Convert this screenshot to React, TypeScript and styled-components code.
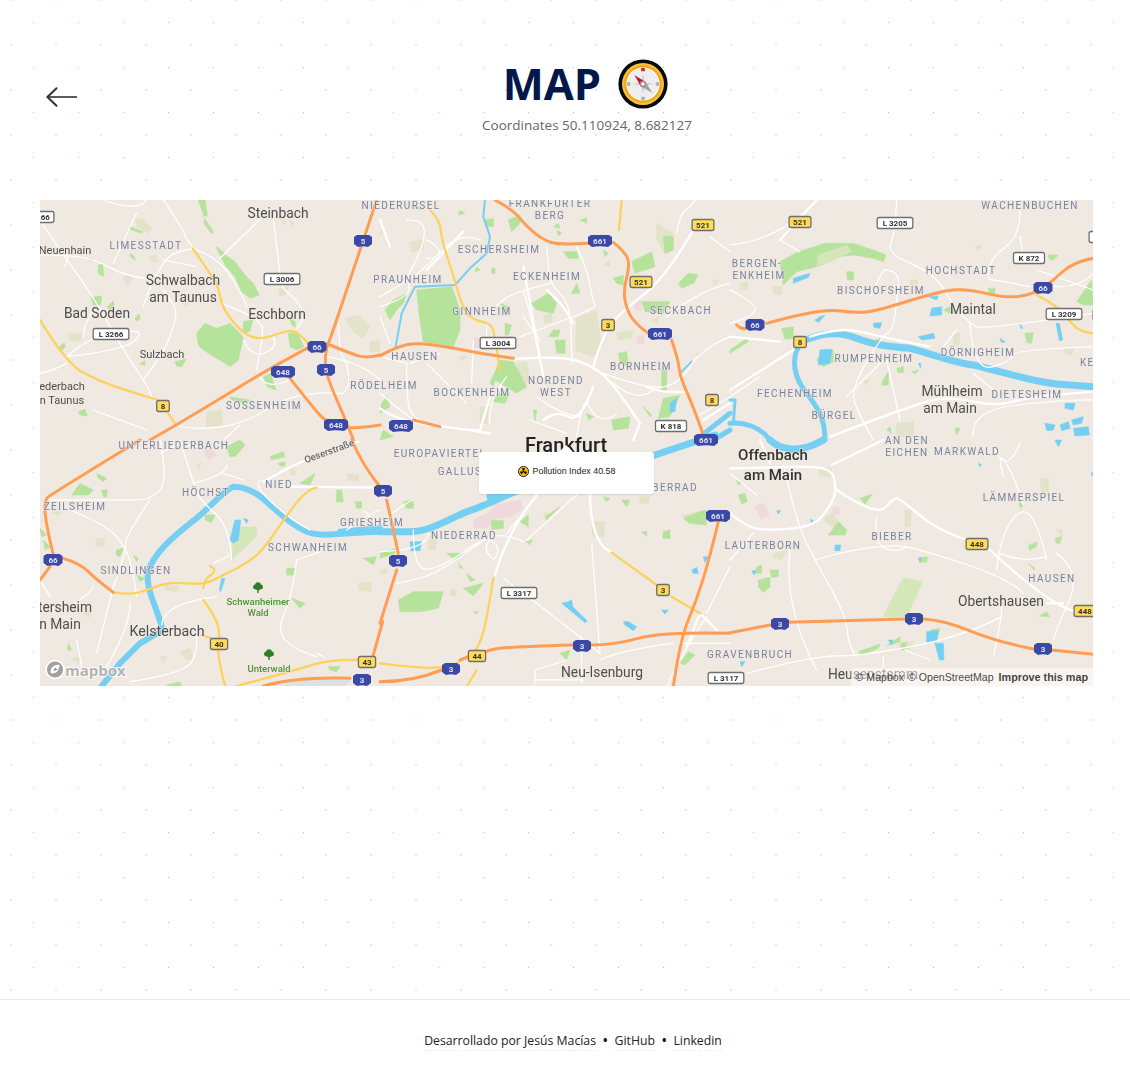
import React from "react";
import styled, { createGlobalStyle } from "styled-components";

const Global = createGlobalStyle`
  html, body { margin: 0; padding: 0; background: #fff; }
  body { font-family: "Open Sans", "Noto Sans", sans-serif; color: #222; }
  * { box-sizing: border-box; }
`;

const Page = styled.div`
  width: 1130px;
  min-height: 1080px;
  display: flex;
  flex-direction: column;
`;
const Main = styled.main`
  flex: 1;
  padding: 59px 37px 0 40px;
  background-color: #fff;
  background-image:
    radial-gradient(circle at 11px 1px, #d8effb 1.1px, transparent 1.5px),
    radial-gradient(circle at 33.5px 22.5px, #86cdf3 0.5px, transparent 0.9px);
  background-size: 45px 45px;
  background-position: 0 -1px, 0 0;
`;
const Header = styled.header`
  display: flex;
  align-items: flex-start;
  height: 141px;
  padding-left: 6px;
`;
const BackLink = styled.a`
  display: block;
  width: 32px;
  height: 20px;
  margin-top: 28px;
  color: #333;
`;
const TitleBlock = styled.div`
  flex: 1;
  display: flex;
  flex-direction: column;
  align-items: center;
`;
const TitleRow = styled.div`
  display: flex;
  align-items: center;
  gap: 17px;
  height: 50px;
`;
const Title = styled.h1`
  margin: 0;
  font-size: 43.5px;
  line-height: 50px;
  font-weight: 700;
  color: #03174b;
`;
const Subtitle = styled.p`
  margin: 7px 0 0 3px;
  font-size: 13.5px;
  line-height: 18px;
  color: #666;
`;
const MapFrame = styled.section`
  position: relative;
  width: 1053px;
  height: 486px;
  overflow: hidden;
  background: #f0e9e1;
`;
const MapSvg = styled.svg`
  display: block;
  width: 1053px;
  height: 486px;
  filter: blur(0.35px);
`;
const Popup = styled.div`
  position: absolute;
  left: 439px;
  top: 252px;
  width: 175px;
  height: 42px;
  display: flex;
  align-items: center;
  justify-content: center;
  gap: 4px;
  padding-bottom: 4px;
  background: #fff;
  border-radius: 3px;
  box-shadow: 0 1px 2px rgba(0, 0, 0, 0.1);
  font-family: "Liberation Sans", Arial, sans-serif;
  font-size: 8.9px;
  color: #222;
  &::before {
    content: "";
    position: absolute;
    left: 80px;
    top: -7px;
    border-left: 7px solid transparent;
    border-right: 7px solid transparent;
    border-bottom: 7px solid #fff;
  }
`;
const Attribution = styled.div`
  position: absolute;
  right: 0;
  bottom: 0;
  height: 18px;
  padding: 0 5px;
  display: flex;
  align-items: center;
  gap: 4px;
  background: rgba(255, 255, 255, 0.5);
  font-family: "Liberation Sans", Arial, sans-serif;
  font-size: 10.6px;
  color: rgba(0, 0, 0, 0.75);
  white-space: nowrap;
`;
const AttrStrong = styled.span`
  margin-left: 1px;
  font-weight: 700;
  font-size: 10.8px;
`;
const Logo = styled.div`
  position: absolute;
  left: 5px;
  bottom: 6px;
  display: flex;
  align-items: center;
`;
const LogoText = styled.span`
  font-family: "Open Sans", sans-serif;
  font-weight: 700;
  font-size: 15px;
  line-height: 20px;
  color: rgba(130, 130, 130, 0.6);
  -webkit-text-stroke: 2px rgba(255, 255, 255, 0.85);
  paint-order: stroke fill;
`;
const Footer = styled.footer`
  height: 81px;
  border-top: 1px solid #e9e9e9;
  background: #fff;
  display: flex;
  justify-content: center;
  align-items: flex-start;
  gap: 7px;
  padding: 32px 0 0 16px;
  font-size: 12.25px;
  line-height: 18px;
  color: #222;
`;
const FooterItem = styled.a`
  border-bottom: 1px dashed #e8eff4;
  color: #222;
`;
const Dot = styled.span`
  font-size: 12px;
  font-weight: 700;
  color: #111;
`;

/* ---- map drawing parts ---- */
const Minor = styled.path`
  fill: none; stroke: #fff; stroke-width: 1.25px; vector-effect: non-scaling-stroke; stroke-linejoin: round; stroke-linecap: round;
`;
const Major = styled.path`
  fill: none; stroke: #fff; stroke-width: 2.3px; vector-effect: non-scaling-stroke; stroke-linejoin: round; stroke-linecap: round;
`;
const Orange = styled.path`
  fill: none; stroke: #ff9d54; stroke-width: 3px; vector-effect: non-scaling-stroke; stroke-linejoin: round; stroke-linecap: round;
`;
const Yellow = styled.path`
  fill: none; stroke: #fbd25b; stroke-width: 2.3px; vector-effect: non-scaling-stroke; stroke-linejoin: round; stroke-linecap: round;
`;
const River = styled.path<{ $w: number }>`
  fill: none; stroke: #75cff2; stroke-width: ${(p) => p.$w}px; vector-effect: non-scaling-stroke; stroke-linejoin: round; stroke-linecap: round;
`;
const Fill = styled.path<{ $c: string }>`
  fill: ${(p) => p.$c};
  stroke: ${(p) => p.$c};
  stroke-width: 0.6px;
  stroke-linejoin: round;
  vector-effect: non-scaling-stroke;
`;
const Town = styled.text<{ $s?: number; $w?: number; $c?: string }>`
  font-family: Roboto, "Open Sans", sans-serif;
  font-size: ${(p) => p.$s ?? 13.8}px;
  font-weight: ${(p) => p.$w ?? 400};
  fill: ${(p) => p.$c ?? "#4d4d4d"};
  text-anchor: middle;
  dominant-baseline: central;
  paint-order: stroke fill;
  stroke: rgba(240, 234, 226, 0.7);
  stroke-width: 1.5px;
`;
const Hood = styled.text`
  font-family: Roboto, "Open Sans", sans-serif;
  font-size: 10px;
  font-weight: 400;
  letter-spacing: 1.4px;
  fill: #78829f;
  text-anchor: middle;
  dominant-baseline: central;
  paint-order: stroke fill;
  stroke: rgba(240, 234, 226, 0.65);
  stroke-width: 1.5px;
`;
const ShieldText = styled.text<{ $c: string }>`
  font-family: Roboto, "Open Sans", sans-serif;
  font-size: 8px;
  font-weight: 700;
  fill: ${(p) => p.$c};
  text-anchor: middle;
  dominant-baseline: central;
`;
const ShieldBox = styled.rect<{ $bg: string }>`
  fill: ${(p) => p.$bg};
  stroke: #6e6e6e;
  stroke-width: 1.3px;
`;
const ShieldHex = styled.path`
  fill: #3b49a6;
`;

const tiles: Record<string, [number, number]> = {
  a: [30, 190], b: [30, 440], c: [380, 190], d: [380, 490], e: [730, 190], f: [730, 440],
};
const tf = (k: string) => `translate(${tiles[k][0]} ${tiles[k][1]}) scale(0.33333)`;
type Seg = [string, string];

/* Turns a polyline into a rounded curve through the midpoints of its legs. */
const smooth = (d: string) =>
  d
    .split(/(?=M)/)
    .map((sub) => {
      const n = (sub.match(/-?\d+(?:\.\d+)?/g) ?? []).map(Number);
      const pts: [number, number][] = [];
      for (let i = 0; i + 1 < n.length; i += 2) pts.push([n[i], n[i + 1]]);
      if (pts.length < 3) return sub;
      let out = `M${pts[0][0]} ${pts[0][1]}`;
      for (let i = 1; i < pts.length - 1; i++) {
        const mx = (pts[i][0] + pts[i + 1][0]) / 2;
        const my = (pts[i][1] + pts[i + 1][1]) / 2;
        out += ` Q${pts[i][0]} ${pts[i][1]} ${i === pts.length - 2 ? pts[i + 1][0] : mx} ${i === pts.length - 2 ? pts[i + 1][1] : my}`;
      }
      return out;
    })
    .join(" ");

const green: Seg[] = [
  ["a", "M500 430 L525 400 L560 415 L600 400 L635 435 L640 445 L625 510 L600 530 L560 505 L520 480 L505 465Z"],
  ["a", "M558 170 L580 185 L585 195 L615 215 L645 255 L670 280 L688 315 L660 325 L635 305 L615 260 L585 225 L570 195Z"],
  ["a", "M205 225 L218 222 L222 260 L205 252Z M183 322 L215 318 L212 345 L190 345Z M232 350 L250 332 L252 345 L238 362Z M315 385 L328 372 L330 388 L318 392Z M88 470 L103 458 L106 470 L95 482Z M328 522 L345 512 L345 526Z M435 515 L468 508 L455 530 L440 528Z M145 665 L165 658 L172 678 L150 675Z"],
  ["a", "M505 30 L525 30 L532 75 L522 80Z M524 85 L550 125 L545 132 L522 100Z M300 110 L340 125 L335 130 L300 118Z M300 190 L312 198 L316 210 L302 202Z"],
  ["a", "M775 430 L800 425 L822 470 L800 480 L780 470Z M640 395 L668 390 L660 425 L640 428Z M700 560 L722 550 L738 600 L712 590Z M600 620 L660 630 L650 640 L605 630Z M780 385 L795 395 L798 412 L785 405Z"],
  ["b", "M590 20 L630 0 L645 15 L615 50 L600 50Z M720 50 L760 35 L765 50 L725 60Z M745 70 L765 65 L765 78 L750 78Z M200 100 L230 115 L220 125 L205 115Z M150 130 L190 150 L175 165 L125 165Z M215 150 L232 150 L230 170 L220 170Z M525 225 L555 225 L545 248 L525 240Z M260 330 L280 325 L270 350 L258 345Z M310 345 L325 355 L320 365Z M770 385 L795 385 L790 405 L770 405Z M30 265 L50 285 L35 290Z M40 300 L60 320 L45 330Z M810 130 L855 100 L840 135Z M920 150 L935 150 L940 185 L920 185Z M975 185 L995 185 L995 205 L980 205Z M785 475 L825 490 L810 505Z M320 405 L345 415 L330 425Z M115 610 L125 630 L112 630Z M1000 355 L1040 350 L1030 375Z"],
  ["b", "M895 680 L930 680 L920 695 L900 690Z M410 735 L450 725 L455 738 L412 738Z"],
  ["c", "M110 300 L215 290 L240 360 L240 420 L220 470 L130 455 L118 380Z"],
  ["c", "M360 510 L400 515 L440 590 L410 610 L345 570 L340 590 L330 580Z M345 610 L390 610 L375 640 L340 635Z M455 340 L505 310 L530 340 L520 370 L470 360Z M520 420 L540 420 L535 440 L505 440Z M525 450 L555 450 L555 490 L530 490Z M375 400 L395 405 L385 435 L375 435Z M360 340 L385 350 L380 370Z"],
  ["c", "M15 360 L40 330 L80 310 L70 340 L50 360 L30 390Z M5 640 L20 620 L30 650 L0 670Z M10 720 L40 740 L0 750Z M110 50 L125 55 L120 60Z M240 60 L255 70 L235 75Z M385 90 L420 75 L425 95 L395 125Z M290 230 L300 240 L285 245Z M335 235 L345 235 L345 250 L335 250Z M315 90 L340 85 L340 110 L320 108Z M520 110 L535 100 L540 115Z M530 120 L545 130 L535 138Z M600 90 L620 85 L620 100Z M550 185 L590 185 L595 205 L565 205Z M670 180 L685 190 L675 200Z"],
  ["c", "M755 215 L815 185 L825 230 L765 250Z M850 140 L880 140 L880 180 L855 190Z M895 280 L925 250 L955 255 L940 280 L905 295Z M700 265 L730 255 L730 285 L710 280Z M575 310 L590 280 L600 310Z M785 335 L870 335 L850 370 L795 365Z M715 490 L740 485 L745 530 L720 520Z M845 540 L860 540 L860 600 L845 600Z M850 625 L900 615 L870 680 L835 685Z M695 690 L750 680 L745 715 L700 720Z M790 650 L815 675 L810 680Z M460 660 L470 660 L465 695Z M620 670 L640 680 L625 690Z"],
  ["d", "M55 330 L100 305 L190 305 L175 355 L120 365 L60 365Z M250 295 L310 280 L280 318Z M200 190 L250 190 L225 210Z M70 35 L100 30 L100 55 L80 55Z M0 190 L50 175 L45 190 L0 205Z M420 95 L445 75 L445 110Z M335 90 L370 92 L370 115 L335 118Z M540 490 L570 480 L560 510Z M900 520 L925 485 L945 495 L915 525Z M910 85 L975 60 L980 105 L930 100Z M785 125 L800 125 L800 140Z M850 125 L870 120 L870 145 L848 145Z M670 20 L690 25 L680 35Z M725 30 L750 30 L740 50Z M440 155 L458 150 L448 165Z M280 365 L295 365 L288 372Z M235 220 L248 235 L240 235Z M260 250 L285 270 L270 275Z M495 80 L540 50 L500 90Z"],
  ["e", "M150 215 L205 185 L285 160 L370 160 L430 180 L468 195 L460 215 L430 205 L370 195 L330 200 L260 230 L200 245 L160 285Z"],
  ["e", "M155 415 L190 410 L190 445 L165 448Z M350 245 L370 245 L372 270 L352 270Z M435 450 L450 445 L450 465 L435 465Z M500 535 L520 530 L520 548 L505 548Z M545 545 L565 540 L555 552Z M460 570 L475 545 L475 585 L455 585Z M885 430 L910 428 L905 460 L890 458Z M775 295 L795 295 L795 310 L778 310Z M955 195 L985 195 L970 210 L958 208Z M1040 335 L1085 270 L1090 345 L1060 345Z M470 720 L480 710 L485 730Z M675 715 L690 715 L680 735Z M640 360 L670 345 L675 370 L655 368Z M0 480 L50 445 L55 455 L0 490Z M260 510 L280 480 L310 480 L310 515 L280 530Z"],
  ["f", "M25 165 L45 160 L52 185 L35 192Z M80 380 L95 375 L95 400 L75 400Z M120 390 L145 390 L145 410 L125 412Z M85 420 L120 412 L120 440 L100 458 L85 440Z M295 285 L325 245 L350 270 L345 285Z M390 175 L428 162 L405 192Z M565 355 L592 350 L590 365 L570 368Z M868 185 L880 195 L870 205Z M895 320 L920 305 L920 320 L900 330Z M975 295 L995 290 L990 310 L980 310Z M895 370 L915 385 L912 390Z M928 528 L950 515 L958 530Z M385 635 L450 612 L445 625 L395 645Z M480 610 L510 590 L510 605 L470 618Z M515 608 L530 605 L525 630 L515 630Z M600 570 L630 565 L625 585 L610 585Z M20 120 L35 130 L25 135Z"],
];
const tan: Seg[] = [
  ["a", "M315 85 L335 85 L365 115 L355 130 L320 110Z M360 198 L380 195 L382 218 L362 215Z M115 430 L158 430 L150 455 L120 450Z M945 385 L985 375 L1020 410 L1000 445 L970 425Z M1020 455 L1050 450 L1048 485 L1020 485Z M530 665 L575 660 L578 705 L530 710Z M750 85 L770 95 L765 108Z M780 90 L795 100 L785 108Z M745 300 L775 290 L765 315 L748 318Z M165 205 L190 205 L185 215Z M460 340 L475 340 L470 352Z"],
  ["b", "M200 295 L225 295 L222 320 L195 318Z M405 435 L445 438 L440 455 L405 450Z M985 430 L1025 425 L1022 455 L985 450Z M450 635 L480 625 L490 660 L470 660Z M390 650 L410 650 L398 668Z M780 88 L795 85 L797 105 L782 105Z M950 100 L985 105 L985 125 L955 120Z M65 215 L95 215 L85 228Z M255 405 L265 405 L255 420Z M500 70 L515 70 L505 90Z M160 515 L185 515 L175 535Z M120 655 L150 650 L145 670Z"],
  ["c", "M590 385 L650 360 L665 470 L640 500 L585 480Z M830 100 L880 130 L855 190 L830 150Z M90 155 L130 150 L130 180 L95 185Z M410 520 L440 515 L450 570 L425 585Z M680 215 L690 215 L690 228 L672 228Z M710 430 L760 420 L755 445 L715 450Z M810 390 L840 380 L830 400Z M490 375 L515 370 L515 395 L495 400Z M300 650 L330 650 L320 700 L300 700Z M0 125 L15 120 L0 135Z M240 500 L260 500 L240 515Z M1000 270 L1015 270 L1005 285Z M950 490 L970 490 L955 498Z"],
  ["d", "M635 95 L675 95 L672 140 L638 138Z M905 75 L980 60 L970 105 L925 100Z M145 150 L170 150 L165 180 L145 178Z M490 70 L505 68 L500 85Z M210 300 L230 300 L228 318 L212 318Z M780 20 L810 20 L805 40 L778 40Z M0 240 L20 235 L20 250 L3 252Z"],
  ["e", "M130 290 L155 290 L155 315 L130 312Z M30 280 L55 275 L50 298 L30 298Z M540 270 L565 270 L560 290 L540 290Z M670 430 L690 430 L688 465 L670 465Z M500 700 L550 695 L550 740 L500 740Z M1005 475 L1032 475 L1025 495 L1005 490Z M735 170 L755 165 L745 185Z M400 570 L420 570 L408 585Z"],
  ["f", "M265 90 L305 85 L300 110 L270 108Z M525 210 L545 210 L540 260 L525 260Z M285 230 L305 220 L335 255 L310 260 L285 245Z M930 115 L955 115 L955 165 L935 160Z M895 310 L905 310 L900 335Z M980 270 L998 270 L995 290Z M130 340 L170 330 L155 360 L130 355Z M505 610 L550 605 L540 630 L510 628Z"],
];
const pink: Seg[] = [
  ["a", "M278 265 L295 250 L308 268 L290 288Z"],
  ["b", "M520 35 L545 25 L558 45 L535 60Z"],
  ["c", "M280 445 L300 445 L300 475 L280 470Z M765 330 L780 330 L785 362 L765 358Z M770 440 L795 435 L790 462 L772 460Z"],
  ["d", "M280 90 L330 65 L345 45 L420 30 L430 55 L395 80 L350 85 L320 115 L285 115Z"],
  ["f", "M75 200 L100 190 L118 225 L95 238Z M305 205 L325 200 L330 222 L310 222Z"],
];
const paleGreen: Seg[] = [
  ["f", "M520 413 L578 425 L530 530 L458 530Z"],
  ["e", "M265 195 L350 165 L365 185 L290 220 L260 230Z"],
  ["b", "M605 360 L680 290 L680 260 L625 262 L610 300Z"],
];
const water: [string, string, number][] = [
  ["b", "M1050 275 C960 275 880 295 830 275 C790 258 760 230 720 195 C690 165 650 140 610 140 C570 160 530 215 480 250 C430 290 370 340 355 395 C345 440 375 490 395 558", 6],
  ["b", "M395 572 L330 610 L270 670 L215 738", 6],
  ["b", "M930 275 L1050 265", 6],
  ["d", "M0 125 L90 125 C150 125 200 90 260 65 C310 50 360 25 415 0", 7],
  ["c", "M315 30 L310 80 L330 140 L320 190 L270 235 L225 285 L105 290 L65 370 L47 470", 2],
  ["c", "M960 740 L1050 670 M1000 750 L1050 720", 5],
  ["c", "M1005 735 L825 795 L570 855 L330 921", 7],
  ["c", "M905 545 L935 515", 2],
  ["e", "M240 445 C280 430 330 425 380 445 C430 465 480 470 540 475 C600 490 680 520 730 525 C820 545 900 575 980 582 L1090 590", 7],
  ["e", "M240 445 L205 470 C185 510 190 560 230 610 C260 650 285 680 285 750", 5],
  ["e", "M0 700 C40 695 90 710 120 750", 5],
  ["e", "M0 630 L15 630 L10 700", 3],
  ["f", "M120 0 C150 30 200 35 250 15 L280 0", 7],
];
const waterFill: Seg[] = [
  ["b", "M600 300 L615 240 L632 240 L625 300 L610 310Z M640 235 L655 240 L650 250Z M575 415 L585 415 L572 455 L568 450Z"],
  ["c", "M870 640 L890 625 L885 665 L870 665Z"],
  ["d", "M90 155 L125 155 L120 182 L92 182Z M545 340 L565 335 L575 330 L578 350 L622 393 L615 398 L572 362Z M730 395 L745 395 L770 410 L760 422 L735 405Z M845 360 L865 360 L855 372Z M935 240 L950 232 L955 250 L940 250Z M970 200 L985 200 L975 218Z"],
  ["e", "M605 355 L635 350 L635 375 L600 378Z M270 380 L285 375 L265 398 L255 390Z M430 400 L455 398 L450 415 L432 412Z M565 440 L610 430 L615 445 L575 450Z M595 320 L625 318 L620 330Z M270 480 L305 478 L300 520 L265 525Z M978 400 L988 400 L998 450 L988 452Z M870 400 L878 415 L872 415Z M810 445 L825 455 L815 458Z M190 265 L240 250 L235 262 L190 280Z M565 520 L572 520 L572 535Z"],
  ["e", "M1005 640 L1035 640 L1030 660 L1005 655Z M945 700 L975 705 L970 720 L950 722Z M990 705 L1015 695 L1020 715 L995 722Z M1025 690 L1060 680 L1055 700 L1030 705Z M1030 715 L1075 710 L1078 735 L1035 738Z"],
  ["f", "M590 575 L625 572 L620 605 L590 607Z M615 610 L640 610 L642 660 L628 660Z M975 0 L995 0 L985 20Z M65 392 L78 392 L72 405Z M315 315 L332 315 L330 332 L315 332Z M565 355 L575 352 L570 365Z M1085 95 L1090 105 L1085 108Z M745 70 L755 75 L750 80Z M140 212 L152 212 L145 222Z M240 238 L250 242 L245 248Z M475 600 L488 600 L485 615Z M30 665 L45 665 L35 680Z"],
];
const minor: Seg[] = [
  ["a", "M400 30 L455 110 L470 150 L490 175 M220 30 L320 68 L350 30 M320 68 L300 110 L250 220 M30 90 L110 210 L190 320 L280 480 L360 600 L365 620 M30 195 L110 195 L200 210 L290 260 L355 265"],
  ["a", "M490 175 L430 185 L395 225 L355 300 L340 350 M400 300 L440 350 L435 400 L400 490 L340 570 M570 205 L620 155 L680 100 L720 50 M730 90 L745 200 L750 290 L800 330 L830 380 L800 415 M575 340 L650 370 L695 400 L700 430 L680 540"],
  ["a", "M640 450 L650 475 L690 500 L750 460 L720 430 M110 500 L280 480 L340 430 L300 420 L180 440 L110 500 M430 705 L480 720 L640 705 L800 600 L940 610 M30 550 L60 545 L110 520 M490 175 L570 205 L640 320 L650 350 M115 195 L105 230 M200 350 L160 400 L160 440 M400 210 L500 230"],
  ["a", "M925 400 L930 500 L950 510 L960 590 L940 610 M890 500 L1000 520 L1050 570 M780 570 L710 600 L690 560 M630 705 L580 750 M190 660 L350 720"],
  ["b", "M390 0 L415 125 L360 180 L290 180 L180 180 L60 180 M450 0 L490 130 L510 180 L600 260 L605 360 M360 180 L285 290 L290 330 L250 440 M120 210 L220 250 L290 320 L315 430 L320 470 M700 120 L660 125 L780 240 L840 270"],
  ["b", "M550 370 L600 345 M560 470 L400 490 L395 555 M800 360 L790 460 L725 610 L860 650 M870 335 L800 360 M580 100 L640 120 M490 130 L590 105 L590 75 M250 440 L200 640 M300 490 L300 560 L230 680 M500 560 L505 640 L460 700 L300 725 M950 270 L1040 210 L1050 210 M1000 215 L1020 215 L1015 240 M140 600 L155 680"],
  ["b", "M500 20 L450 10 M450 10 L390 40 M860 640 L880 650 M30 420 L60 470 M120 500 L180 460 L190 440"],
  ["c", "M0 320 L80 275 L140 230 L240 125 L300 150 M80 90 L130 90 L135 150 L100 230 L80 260 L95 320 L0 350 M140 150 L180 170 L175 205 L140 205 M500 170 L505 230 L510 280 L560 330 L575 400 L575 520 M510 280 L430 300 L360 330 L330 370 M430 300 L460 400 L480 520"],
  ["c", "M590 170 L620 230 L640 340 L650 350 L570 385 L420 440 M80 520 L80 640 L100 680 L150 710 L300 720 M140 520 L220 600 L260 640 M280 450 L275 580 M1050 280 L960 300 L860 380 M1050 440 L960 480 L900 580 L810 600 L670 550 M710 670 L690 690 L640 680 L610 610 L590 740 M820 600 L770 640 L700 580 M600 680 L530 670 L470 620 M380 560 L320 640 L330 700 M430 380 L480 450"],
  ["c", "M890 130 L900 70 L935 50 L945 30 M990 140 L1050 185 M950 680 L1050 620 M0 500 L80 520 M90 520 L180 490 M0 610 L60 660 L100 690 M450 690 L560 730 M0 380 L30 460 M320 400 L320 460"],
  ["d", "M0 100 L70 40 L100 30 M100 120 L100 240 L180 235 L300 150 L380 130 L430 155 M0 185 L145 180 L145 130 M50 280 L130 265 L200 230 L305 155 M380 130 L470 20 M440 150 L590 15 M635 160 L645 300 L660 490 M370 265 L450 325 L600 440 L660 490 M605 440 L605 580 M465 540 L560 510 M465 540 L465 580 M465 570 L610 570 M660 510 L720 480 L880 460 M900 460 L1050 460 M980 380 L910 480 L860 590 M1050 230 L980 370 M330 150 L310 170 L340 215 L355 190 L350 160 L330 150"],
  ["e", "M260 30 L150 150 L0 165 M500 30 L495 130 L470 190 L590 240 L640 290 L670 350 L720 400 L760 420 L1090 370 M870 60 L870 140 L785 200 L770 270 L800 270 L900 290 M870 140 L880 200 M460 240 L510 240 L500 330 L490 420 L455 440 L360 600 L390 680 L430 750 M460 240 L420 320 M0 300 L80 340 L70 380 L0 400 M150 150 L210 185 M720 400 L730 550 L850 510 L850 480 L1090 470 M730 550 L790 600 M1090 250 L1030 310 L930 280 M0 620 L90 560 M350 620 L460 510 M470 510 L510 690 M680 420 L640 470 M920 240 L1090 300 M730 740 L720 660 L1000 630 L1090 630"],
  ["f", "M0 100 L80 165 M160 75 L200 250 L255 360 L350 530 L355 620 L380 650 M255 360 L420 310 L530 320 M530 320 L830 400 L880 460 M440 230 L430 310 L500 340 L530 320 M800 390 L810 290 L880 195 L930 270 L950 360 M880 195 L850 100 L800 30 L820 110 M790 20 L830 110 L870 10 M950 350 L880 370 L810 340 M980 340 L1030 380 L1030 460 L990 540 L970 600 M815 500 L815 540 L790 650 M815 530 L700 590 L385 650 L260 645 L50 700 M70 280 L0 360 M180 330 L160 500 L260 690 M525 630 L600 660 M460 650 L460 738"],
];
const major: Seg[] = [
  ["b", "M700 125 L790 75 L830 60 L985 5 M780 140 L1050 143"],
  ["c", "M400 507 L550 497 L640 530 L700 580 L780 700 M640 530 L670 430 L720 370 L860 260 L940 120 M0 655 L50 690 L200 710 L330 730 M330 620 L300 720 M800 590 L840 610 L915 605 M1050 640 L970 690 M640 590 L600 700 L530 660 L490 690 M500 300 L550 340 L580 400 M140 240 L250 125 M0 90 L30 170 M780 700 L760 750 M430 230 L490 560"],
  ["d", "M470 15 L380 130 L345 255 M630 0 L630 160 L695 188 M960 370 L920 470 M965 375 L1010 420"],
  ["e", "M0 440 L150 455 M240 440 L330 410 L450 440 L600 470 M260 30 L150 150 M0 600 L190 480 M300 740 L560 640 L660 620 L800 650 L900 620 L1090 605"],
  ["f", "M0 220 L50 260 L110 272 L250 260 L300 200 L320 150 L305 80 L230 80 M305 75 L420 20 L460 0 M320 150 L440 230 L490 175 L510 175 L620 270 L710 300 M775 325 L950 490 L1035 515 M950 490 L1000 490 M0 85 L230 80 M90 0 L120 70"],
];
const orange: Seg[] = [
  ["a", "M1040 30 L1000 150 L900 450 L890 470 L885 510 L890 560 L960 720 L970 750 M900 465 L960 490 L1010 505 L1050 495 M360 750 L430 710 L580 620 L720 535 L840 470 M780 565 L840 640 L885 695 L960 720 L1050 705"],
  ["b", "M330 0 L60 165 L45 180 L45 240 L70 345 M100 355 L150 370 L200 420 L250 457 M30 420 L60 380 M965 0 L1000 80 L1050 140 M1058 545 L1020 680 M700 738 L800 710 L960 715"],
  ["c", "M345 30 L400 60 L440 110 L490 150 L540 165 L625 160 M700 157 L735 185 L750 225 L730 300 L740 360 L770 405 L805 430 M875 450 L895 510 L900 560 L940 650 L970 735 M0 497 L50 470 L110 458 L200 470 L300 490 L400 505 M100 690 L180 710"],
  ["d", "M20 30 L55 190 M50 240 L0 400 M0 575 L100 575 L185 540 M240 510 L320 480 L400 470 L580 465 M635 465 L700 465 L850 425 L1050 430 M1015 95 L990 200 L950 330 L900 450 L880 590"],
  ["e", "M110 400 L270 355 L380 370 L450 360 L640 300 L720 298 L830 325 L910 312 L960 280 L1030 215 L1090 205 M20 405 L35 420 L50 415"],
  ["f", "M0 578 L120 555 M175 547 L525 537 M580 537 L640 540 L800 605 L910 627 M965 630 L1090 643"],
];
const yellow: Seg[] = [
  ["a", "M488 175 L540 250 L565 290 L575 345 L600 385 L640 430 L690 450 L760 425 L800 420 L835 460 M30 390 L110 520 L200 570 L300 605 L385 630 M415 670 L435 700"],
  ["b", "M860 143 L835 145 L770 225 L700 330 L650 370 L580 405 L520 435 L420 425 L350 450 L300 465 L250 457 M540 378 L565 390 L520 420 L520 445 M520 480 L560 535 L570 590 L560 640 L585 738 M515 585 L545 595 M620 738 L800 690 L900 658 L990 660"],
  ["c", "M725 30 L717 120 M150 60 L180 90 L185 150 L215 240 L250 360 L280 390 L330 400 L345 430 L360 545"],
  ["d", "M695 188 L830 285 M875 320 L960 370 M340 265 L320 390 L300 460 L280 490 L220 525 M0 520 L160 540 L190 530 M290 540 L260 590"],
  ["e", "M920 315 L985 350 L1020 395 L1050 425 L1090 430"],
];

const hoods: [string, number, number][] = [
  ["NIEDERURSEL", 401, 205], ["LIMESSTADT", 146, 245], ["PRAUNHEIM", 408, 279], ["ESCHERSHEIM", 499, 249], ["ECKENHEIM", 547, 276],
  ["FRANKFURTER", 550, 203], ["BERG", 550, 215], ["GINNHEIM", 482, 311], ["HAUSEN", 415, 356], ["RÖDELHEIM", 384, 385],
  ["BOCKENHEIM", 472, 392], ["NORDEND", 556, 380], ["WEST", 556, 392], ["BORNHEIM", 641, 366], ["SECKBACH", 681, 310],
  ["BERGEN-", 757, 263], ["ENKHEIM", 759, 275], ["HOCHSTADT", 961, 270], ["BISCHOFSHEIM", 881, 290], ["WACHENBUCHEN", 1030, 205],
  ["DÖRNIGHEIM", 978, 352], ["RUMPENHEIM", 874, 358], ["FECHENHEIM", 795, 393], ["BÜRGEL", 834, 415], ["DIETESHEIM", 1027, 394],
  ["KES", 1091, 362], ["AN DEN", 907, 440], ["EICHEN", 907, 452], ["MARKWALD", 967, 451], ["LÄMMERSPIEL", 1024, 497],
  ["BIEBER", 892, 536], ["LAUTERBORN", 763, 545], ["HAUSEN", 1052, 578], ["GRAVENBRUCH", 750, 654], ["OBERRAD", 671, 487],
  ["SOSSENHEIM", 264, 405], ["UNTERLIEDERBACH", 174, 445], ["EUROPAVIERTEL", 440, 453], ["GALLUS", 460, 471], ["NIED", 279, 484],
  ["HÖCHST", 206, 492], ["ZEILSHEIM", 75, 506], ["GRIESHEIM", 372, 522], ["SCHWANHEIM", 308, 547], ["NIEDERRAD", 464, 535],
  ["SINDLINGEN", 136, 570],
];
const towns: [string, number, number, number?][] = [
  ["Steinbach", 278, 213], ["Neuenhain", 65, 250, 11], ["Schwalbach", 183, 280], ["am Taunus", 183, 297], ["Bad Soden", 97, 313],
  ["Eschborn", 277, 314], ["Sulzbach", 162, 354, 11], ["ederbach", 62, 386, 11], ["n Taunus", 62, 400, 11], ["tersheim", 65, 607],
  ["n Main", 60, 624], ["Kelsterbach", 167, 631, 14.2], ["Neu-Isenburg", 602, 672], ["Mühlheim", 952, 391], ["am Main", 950, 408],
  ["Maintal", 973, 309], ["Obertshausen", 1001, 601], ["Heusenstamm", 873, 674],
];
const motorways: [string, number, number][] = [
  ["5", 363, 241], ["66", 317, 347], ["5", 326, 370], ["648", 283, 372], ["648", 336, 425], ["648", 401, 426], ["661", 600, 241],
  ["661", 660, 334], ["661", 706, 440], ["661", 718, 516], ["66", 755, 325], ["66", 1043, 288], ["66", 53, 560], ["5", 383, 491],
  ["5", 398, 561], ["3", 362, 680], ["3", 451, 669], ["3", 582, 646], ["3", 780, 624], ["3", 914, 619], ["3", 1043, 649],
];
const yellowSigns: [string, number, number][] = [
  ["521", 703, 225], ["521", 641, 282], ["521", 800, 222], ["3", 608, 325], ["8", 712, 400], ["8", 800, 342], ["8", 163, 406],
  ["40", 219, 644], ["43", 367, 662], ["44", 477, 656], ["3", 663, 590], ["448", 977, 544], ["448", 1085, 611],
];
const whiteSigns: [string, number, number][] = [
  ["L 3006", 282, 279], ["L 3266", 111, 334], ["L 3004", 498, 343], ["L 3317", 519, 593], ["K 818", 671, 426], ["L 3205", 895, 223],
  ["K 872", 1029, 258], ["L 3209", 1064, 314], ["L 3117", 726, 678], ["266", 43, 217], ["L 3", 1100, 237], ["L 3", 1104, 315],
];

const Tree = ({ x, y }: { x: number; y: number }) => (
  <g transform={`translate(${x} ${y})`} fill="#2f7d26">
    <circle cx="-2.6" cy="-1" r="2.4" />
    <circle cx="2.6" cy="-1" r="2.4" />
    <circle cx="0" cy="-3" r="2.8" />
    <circle cx="0" cy="0" r="2.4" />
    <rect x="-0.7" y="0" width="1.4" height="5" />
  </g>
);
const Motorway = ({ t, x, y }: { t: string; x: number; y: number }) => {
  const w = t.length === 3 ? 12 : t.length === 2 ? 9.5 : 9;
  return (
    <g transform={`translate(${x} ${y})`}>
      <ShieldHex d={`M${-w} -4 L${-w + 3} -6 L${w - 3} -6 L${w} -4 L${w} 3 L${w - 4} 6 Q0 4.5 ${-w + 4} 6 L${-w} 3Z`} />
      <ShieldText $c="#dfe3f5" y="0">{t}</ShieldText>
    </g>
  );
};
const Sign = ({ t, x, y, bg }: { t: string; x: number; y: number; bg: string }) => {
  const w = t.length * 4.6 + 8;
  return (
    <g transform={`translate(${x} ${y})`}>
      <ShieldBox $bg={bg} x={-w / 2} y={-5.5} width={w} height={11} rx={2} />
      <ShieldText $c="#333" y="0">{t}</ShieldText>
    </g>
  );
};
const Segs = ({ C, list }: { C: any; list: Seg[] }) => (
  <>{list.map(([k, d], i) => <C key={i} transform={tf(k)} d={smooth(d)} />)}</>
);
const Fills = ({ c, list }: { c: string; list: Seg[] }) => (
  <>{list.map(([k, d], i) => <Fill key={i} $c={c} transform={tf(k)} d={d} />)}</>
);

const ArrowLeft = () => (
  <svg width="32" height="20" viewBox="0 0 32 20" fill="none" stroke="currentColor">
    <path d="M1 10 H31" strokeWidth="1.6" />
    <path d="M10.5 1.2 L1.4 10 L10.5 18.8" strokeWidth="2" strokeLinecap="round" strokeLinejoin="round" />
  </svg>
);
const Compass = () => (
  <svg width="50" height="50" viewBox="0 0 50 50">
    <circle cx="25" cy="25" r="24.6" fill="#0a0a0a" />
    <circle cx="25" cy="25" r="21" fill="#f9c23c" />
    <circle cx="25" cy="25" r="19" fill="#f2a91e" />
    <circle cx="25" cy="25" r="16.6" fill="#fff" />
    <circle cx="25" cy="25" r="15.4" fill="#eeeeee" />
    <rect x="23.2" y="9" width="3.6" height="3.2" fill="#d8201f" />
    <rect x="23.2" y="37.8" width="3.6" height="3.2" fill="#b0b0b0" />
    <rect x="9" y="23.2" width="3.2" height="3.6" fill="#b0b0b0" />
    <rect x="37.8" y="23.2" width="3.2" height="3.6" fill="#b0b0b0" />
    <path d="M25 15 L26.2 23.8 L35 25 L26.2 26.2 L25 35 L23.8 26.2 L15 25 L23.8 23.8Z" fill="#bdbdbd" />
    <path d="M34.5 34 L23 27.5 L27.5 23Z" fill="#a3a3a3" />
    <path d="M16.3 16 L27.5 23 L23 27.5Z" fill="#d2122c" />
    <circle cx="25" cy="25" r="3.2" fill="#8f8f8f" />
    <circle cx="25" cy="25" r="1.7" fill="#fff" />
  </svg>
);
const Radiation = () => (
  <svg width="11" height="11" viewBox="0 0 24 24">
    <circle cx="12" cy="12" r="11" fill="#fcc21b" stroke="#111" strokeWidth="2" />
    <circle cx="12" cy="12" r="2" fill="#111" />
    <path d="M12 12 L8.3 5.6 A7.5 7.5 0 0 1 15.7 5.6Z M12 12 L19.5 12 A7.5 7.5 0 0 1 15.7 18.4Z M12 12 L8.3 18.4 A7.5 7.5 0 0 1 4.5 12Z" fill="#111" />
  </svg>
);
const MapLogoMark = () => (
  <svg width="20" height="21" viewBox="0 0 21 21">
    <circle cx="10.5" cy="10.5" r="9.4" fill="rgba(130,130,130,.7)" stroke="#fff" strokeWidth="1.8" />
    <path d="M6 14.5 C5 9 9 5 15 5.5 C15.5 11 12 15.5 6 14.5Z" fill="#fff" />
    <path d="M9 12 L10.5 8.5 L12 10 L14 10.5 Z" fill="#8a8a8a" />
  </svg>
);

export default function App() {
  return (
    <Page>
      <Global />
      <Main>
        <Header>
          <BackLink aria-label="Back"><ArrowLeft /></BackLink>
          <TitleBlock>
            <TitleRow>
              <Title>MAP</Title>
              <Compass />
            </TitleRow>
            <Subtitle>Coordinates 50.110924, 8.682127</Subtitle>
          </TitleBlock>
        </Header>
        <MapFrame>
          <MapSvg viewBox="40 200 1053 486">
            <rect x="40" y="200" width="1053" height="486" fill="#f0e9e1" />
            <Fills c="#e3e3ca" list={tan} />
            <Fills c="#efd9dd" list={pink} />
            <Fills c="#b5e39b" list={green} />
            <Fills c="#d5e6b9" list={paleGreen} />
            <Fill $c="#dfe0e2" d="M280 686 L300 680 L350 680 L345 686Z" />
            <Fills c="#75cff2" list={waterFill} />
            {water.map(([k, d, w], i) => <River key={i} $w={w} transform={tf(k)} d={d} />)}
            <Segs C={Minor} list={minor} />
            <Segs C={Major} list={major} />
            <Segs C={Yellow} list={yellow} />
            <Segs C={Orange} list={orange} />
            {hoods.map(([t, x, y], i) => <Hood key={i} x={x} y={y + 0.5}>{t}</Hood>)}
            {towns.map(([t, x, y, s], i) => <Town key={i} x={x} y={y} $s={s}>{t}</Town>)}
            <Town x={566} y={445} $s={20} $w={500} $c="#222">Frankfurt</Town>
            <Town x={773} y={455} $s={15} $w={500} $c="#333">Offenbach</Town>
            <Town x={773} y={475} $s={15} $w={500} $c="#333">am Main</Town>
            <Town x={329} y={451} $s={9.5} $w={500} $c="#666" transform="rotate(-20 329 451)">Oeserstraße</Town>
            <Tree x={258} y={588} />
            <Tree x={269} y={655} />
            <Town x={258} y={601} $s={9.5} $w={500} $c="#4d9438">Schwanheimer</Town>
            <Town x={258} y={612} $s={9.5} $w={500} $c="#4d9438">Wald</Town>
            <Town x={269} y={668} $s={9.5} $w={500} $c="#4d9438">Unterwald</Town>
            {motorways.map(([t, x, y], i) => <Motorway key={i} t={t} x={x} y={y} />)}
            {yellowSigns.map(([t, x, y], i) => <Sign key={i} t={t} x={x} y={y} bg="#ffdb58" />)}
            {whiteSigns.map(([t, x, y], i) => <Sign key={i} t={t} x={x} y={y} bg="#fff" />)}
          </MapSvg>
          <Popup>
            <Radiation />
            <span>Pollution Index 40.58</span>
          </Popup>
          <Logo>
            <MapLogoMark />
            <LogoText>mapbox</LogoText>
          </Logo>
          <Attribution>
            <span>© Mapbox</span>
            <span>© OpenStreetMap</span>
            <AttrStrong>Improve this map</AttrStrong>
          </Attribution>
        </MapFrame>
      </Main>
      <Footer>
        <FooterItem>Desarrollado por Jesús Macías</FooterItem>
        <Dot>•</Dot>
        <FooterItem>GitHub</FooterItem>
        <Dot>•</Dot>
        <FooterItem>Linkedin</FooterItem>
      </Footer>
    </Page>
  );
}
